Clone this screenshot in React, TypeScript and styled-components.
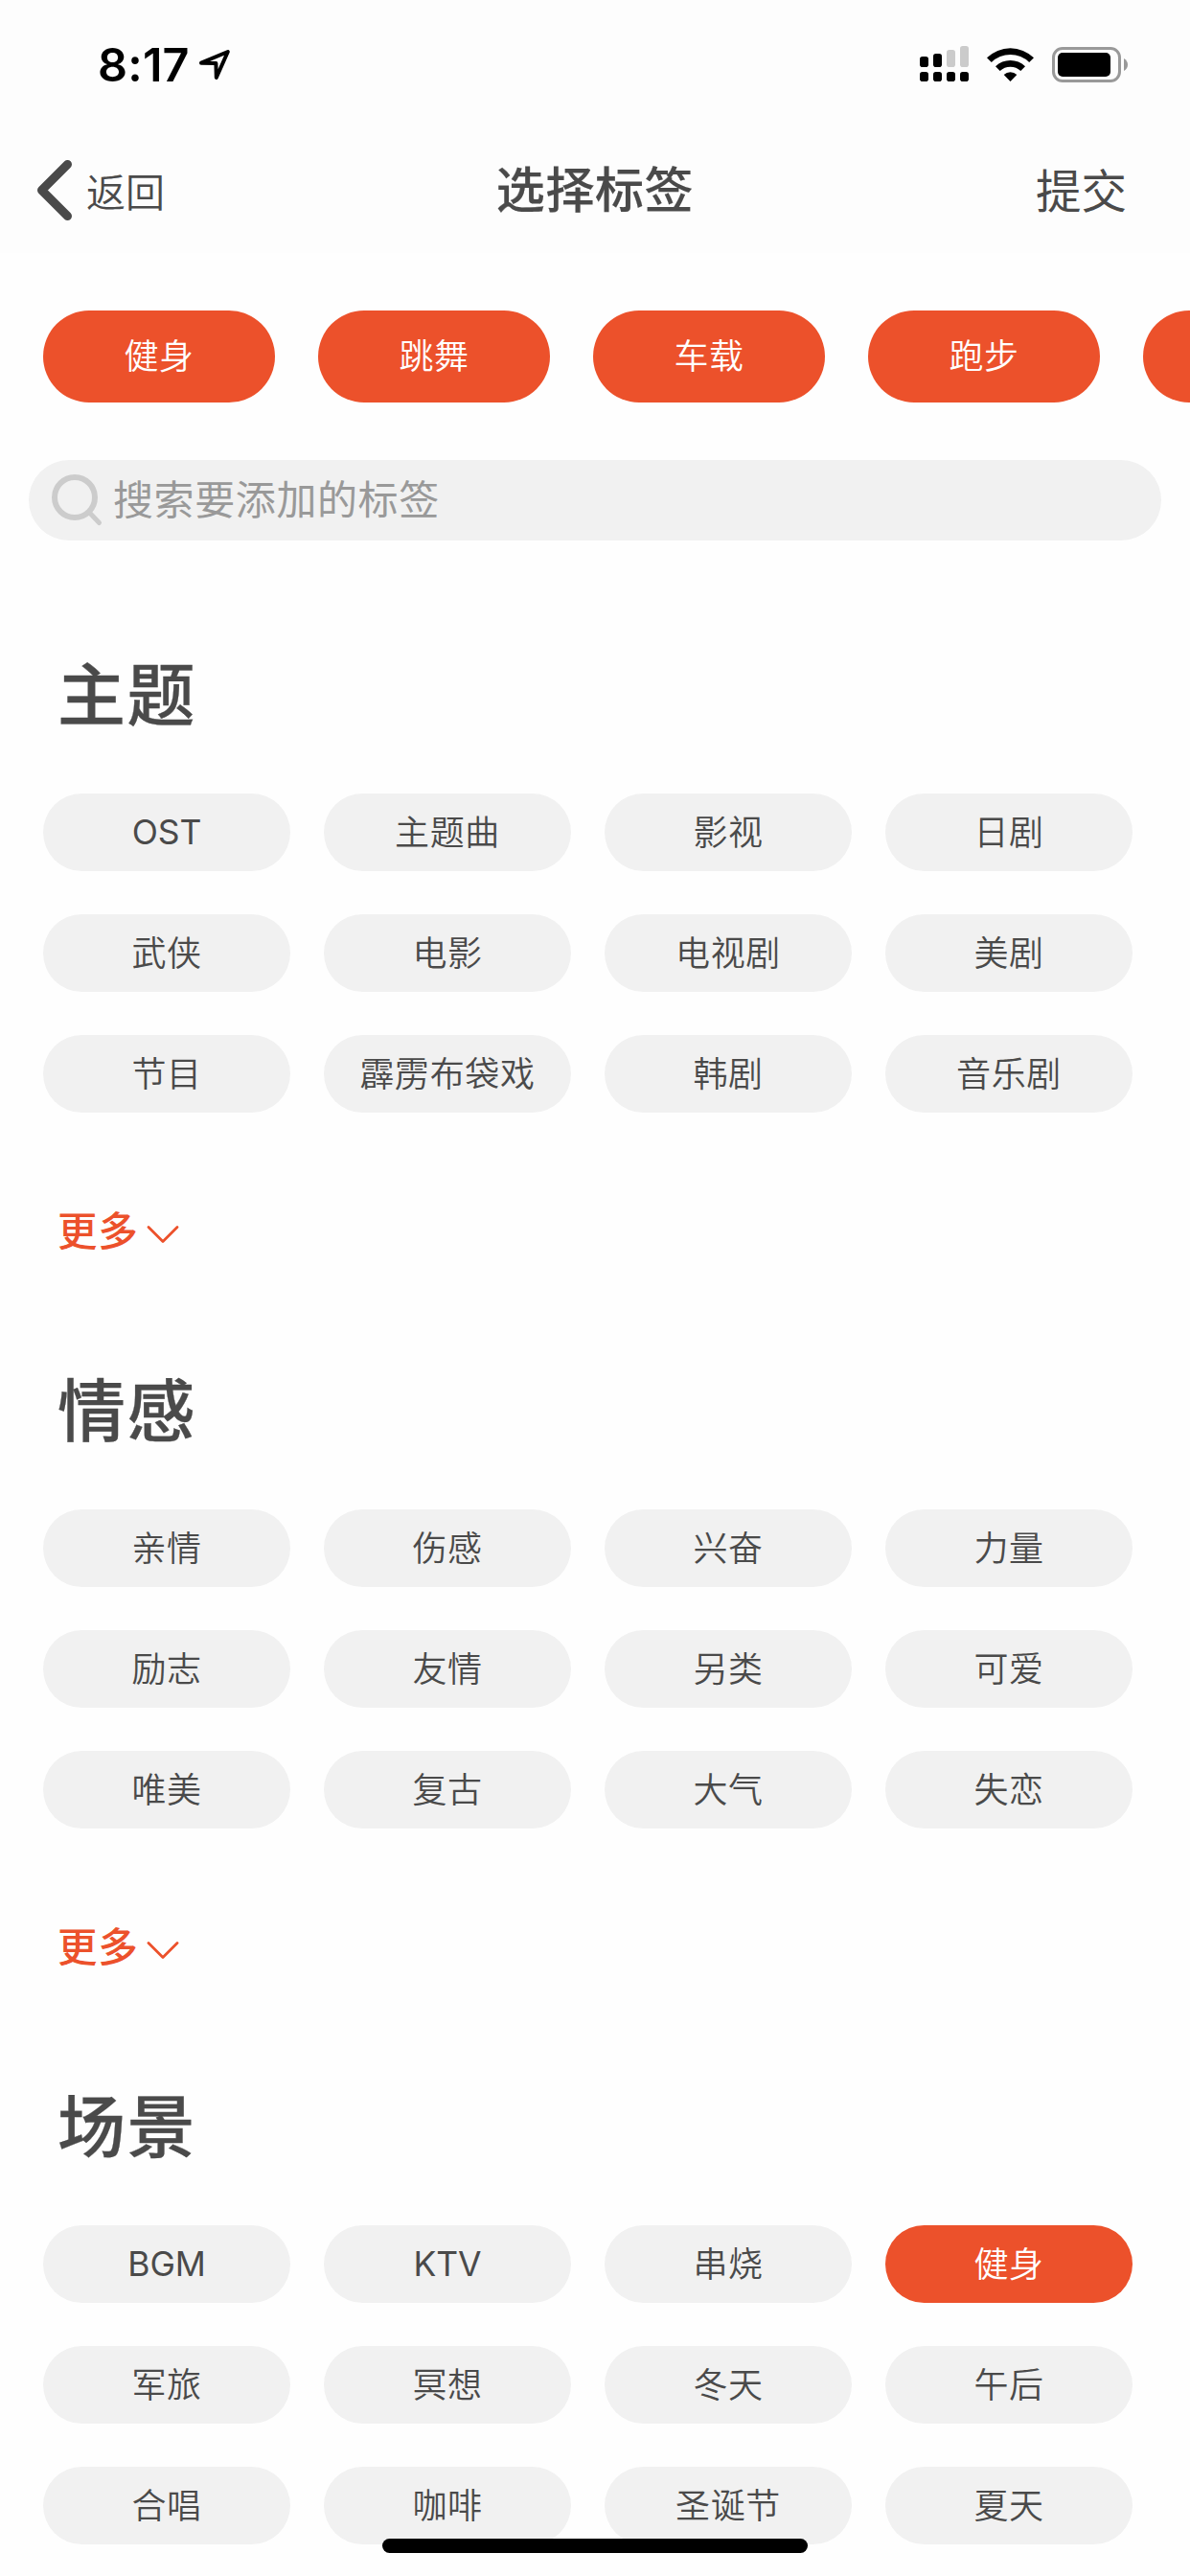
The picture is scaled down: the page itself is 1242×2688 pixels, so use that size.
import React from 'react';
import styled, { createGlobalStyle } from 'styled-components';

const ORANGE = '#ec512b';
const INK = '#4a4a4a';
const PILL = '#f1f1f1';

const GlobalStyle = createGlobalStyle`
  * { box-sizing: border-box; }
  html, body { margin: 0; padding: 0; background: #fefefe; }
  body {
    font-family: Inter, 'Noto Sans CJK SC', sans-serif;
    color: ${INK};
    overflow: hidden;
  }
  button { font: inherit; color: inherit; border: 0; padding: 0; background: none; }
`;

const Screen = styled.main`
  position: relative;
  width: 1242px;
  height: 2688px;
  overflow: hidden;
  display: flex;
  flex-direction: column;
`;

const Top = styled.header`
  flex: none;
  height: 264px;
  background: #fdfdfd;
`;

const StatusBar = styled.div`
  height: 132px;
  padding: 0 65px 0 102px;
  display: flex;
  justify-content: space-between;
`;

const StatusGroup = styled.div`
  display: flex;
  align-items: flex-start;
`;

const Time = styled.span`
  margin-top: 38px;
  width: 104px;
  font-size: 48.5px;
  line-height: 60px;
  font-weight: 600;
  letter-spacing: 0.2px;
  color: #000;
`;

const StatusIcon = styled.svg<{ $left?: number }>`
  display: block;
  margin-top: 46px;
  margin-left: ${(p) => p.$left ?? 0}px;
`;

const NavBar = styled.nav`
  height: 132px;
  display: grid;
  grid-template-columns: 1fr auto 1fr;
`;

const Back = styled.button`
  display: flex;
  align-items: flex-start;
  margin-left: 36px;
  font-size: 41px;
  line-height: 60px;
  font-weight: 350;
`;

const BackIcon = styled.svg`
  margin-top: 33px;
`;

const BackLabel = styled.span`
  margin: 39px 0 0 12px;
`;

const NavTitle = styled.h1`
  margin: 37px 0 0;
  font-size: 51px;
  line-height: 60px;
  font-weight: 500;
  letter-spacing: 0.6px;
  -webkit-text-stroke: 0.2px currentColor;
`;

const Submit = styled.button`
  justify-self: end;
  align-self: start;
  margin: 38px 66px 0 0;
  font-size: 47.5px;
  line-height: 60px;
`;

const Selected = styled.div`
  flex: none;
  display: flex;
  gap: 45px;
  padding: 60px 0 60px 45px;
  overflow: hidden;
`;

const Chip = styled.button<{ $active?: boolean; $large?: boolean; $latin?: boolean }>`
  flex: none;
  display: flex;
  align-items: center;
  justify-content: center;
  width: ${(p) => (p.$large ? 242 : 258)}px;
  height: ${(p) => (p.$large ? 96 : 81)}px;
  border-radius: ${(p) => (p.$large ? 48 : 40.5)}px;
  background: ${(p) => (p.$active ? ORANGE : PILL)};
  color: ${(p) => (p.$active ? '#fff' : INK)};
  font-size: ${(p) => (p.$latin ? 35.5 : 36)}px;
  font-weight: ${(p) => (p.$latin ? 380 : 350)};
  line-height: 54px;
  letter-spacing: ${(p) => (p.$latin ? -0.1 : 0.6)}px;
  white-space: nowrap;
`;

const Search = styled.div`
  flex: none;
  display: flex;
  align-items: center;
  height: 84px;
  margin: 0 30px;
  padding-left: 22px;
  border-radius: 42px;
  background: ${PILL};
  color: #999;
  font-size: 42px;
  line-height: 60px;
  letter-spacing: 0.6px;
`;

const SearchIcon = styled.svg`
  margin-right: 10px;
`;

const Section = styled.section`
  flex: none;
  height: 747px;
  display: flex;
  flex-direction: column;
`;

const Heading = styled.h2`
  flex: none;
  margin: 102px 0 0 60px;
  height: 162px;
  font-size: 71px;
  line-height: 118px;
  font-weight: 500;
  letter-spacing: 1.4px;
  -webkit-text-stroke: 0.3px currentColor;
`;

const Grid = styled.div`
  flex: none;
  display: grid;
  grid-template-columns: repeat(4, 258px);
  gap: 45px 35px;
  padding-left: 45px;
`;

const More = styled.button`
  flex: none;
  display: flex;
  align-items: center;
  align-self: flex-start;
  margin: 98px 0 0 60px;
  color: ${ORANGE};
  font-size: 41.5px;
  line-height: 52px;
  font-weight: 500;
  letter-spacing: 0.8px;
`;

const MoreIcon = styled.svg`
  margin: 5px 0 0 8px;
`;

const HomeIndicator = styled.div`
  position: absolute;
  left: 399px;
  bottom: 24px;
  width: 444px;
  height: 15px;
  border-radius: 7.5px;
  background: #000;
`;

const selected = ['健身', '跳舞', '车载', '跑步', ''];

const sections = [
  {
    title: '主题',
    tags: ['OST', '主题曲', '影视', '日剧', '武侠', '电影', '电视剧', '美剧', '节目', '霹雳布袋戏', '韩剧', '音乐剧'],
  },
  {
    title: '情感',
    tags: ['亲情', '伤感', '兴奋', '力量', '励志', '友情', '另类', '可爱', '唯美', '复古', '大气', '失恋'],
  },
  {
    title: '场景',
    tags: ['BGM', 'KTV', '串烧', '健身', '军旅', '冥想', '冬天', '午后', '合唱', '咖啡', '圣诞节', '夏天'],
  },
];

const LocationArrow = () => (
  <StatusIcon width="36" height="40" viewBox="206 46 36 40">
    <path
      d="M210 65.7 L237.8 54 L225.8 81 L225.4 66 Z"
      fill="none"
      stroke="#000"
      strokeWidth="4"
      strokeLinejoin="round"
    />
  </StatusIcon>
);

const signalBars = [
  { x: 960, top: 59, on: true },
  { x: 974, top: 56, on: true },
  { x: 988, top: 52, on: false },
  { x: 1002, top: 48, on: false },
];

const Signal = () => (
  <StatusIcon width="51" height="40" viewBox="960 46 51 40">
    {signalBars.map((b) => (
      <React.Fragment key={b.x}>
        <rect x={b.x} y={b.top} width="9" height={70 - b.top} rx="2.8" fill={b.on ? '#000' : '#cbcbcb'} />
        <rect x={b.x} y="75" width="9" height="10" rx="2.8" fill="#000" />
      </React.Fragment>
    ))}
  </StatusIcon>
);

const Wifi = () => (
  <StatusIcon $left={19} width="49" height="40" viewBox="1030 46 49 40">
    <path d="M1030 60.3 A35 35 0 0 1 1079 60.3 L1074.2 65 A28.3 28.3 0 0 0 1034.8 65 Z" />
    <path d="M1039 69.2 A22.3 22.3 0 0 1 1070 69.2 L1065.3 74 A15.6 15.6 0 0 0 1043.7 74 Z" />
    <path d="M1047.7 77.9 A9.8 9.8 0 0 1 1061.3 77.9 L1054.5 85 Z" />
  </StatusIcon>
);

const Battery = () => (
  <StatusIcon $left={19} width="79" height="40" viewBox="1098 46 79 40">
    <rect x="1099.5" y="50.5" width="69" height="34" rx="9.5" fill="none" stroke="#999" strokeWidth="3" />
    <rect x="1104" y="55" width="55" height="25" rx="5" />
    <path d="M1173 61 Q1177 63.5 1177 67.5 Q1177 71.5 1173 74 Z" fill="#999" />
  </StatusIcon>
);

export default function App() {
  return (
    <>
      <GlobalStyle />
      <Screen>
        <Top>
          <StatusBar>
            <StatusGroup>
              <Time>8:17</Time>
              <LocationArrow />
            </StatusGroup>
            <StatusGroup>
              <Signal />
              <Wifi />
              <Battery />
            </StatusGroup>
          </StatusBar>
          <NavBar>
            <Back>
              <BackIcon width="42" height="68" viewBox="0 0 42 68" fill="none" stroke={INK} strokeWidth="9" strokeLinecap="round" strokeLinejoin="round">
                <path d="M34.5 6.5 L7.5 33.5 L34.5 60.5" />
              </BackIcon>
              <BackLabel>返回</BackLabel>
            </Back>
            <NavTitle>选择标签</NavTitle>
            <Submit>提交</Submit>
          </NavBar>
        </Top>
        <Selected>
          {selected.map((t, i) => (
            <Chip key={i} $active $large>{t}</Chip>
          ))}
        </Selected>
        <Search>
          <SearchIcon width="56" height="56" viewBox="0 0 56 56" fill="none" stroke="#ccc" strokeWidth="6" strokeLinecap="round">
            <circle cx="26" cy="25" r="21" />
            <path d="M42 41.5 L51.5 51.5" strokeWidth="5" />
          </SearchIcon>
          搜索要添加的标签
        </Search>
        {sections.map((s, i) => (
          <Section key={s.title}>
            <Heading>{s.title}</Heading>
            <Grid>
              {s.tags.map((t) => (
                <Chip key={t} $active={i === 2 && t === '健身'} $latin={/^[A-Z]+$/.test(t)}>{t}</Chip>
              ))}
            </Grid>
            {i < 2 && (
              <More>
                更多
                <MoreIcon width="34" height="20" viewBox="0 0 34 20" fill="none" stroke={ORANGE} strokeWidth="2.8" strokeLinecap="round" strokeLinejoin="round">
                  <path d="M2 2.5 L17 17.5 L32 2.5" />
                </MoreIcon>
              </More>
            )}
          </Section>
        ))}
        <HomeIndicator />
      </Screen>
    </>
  );
}
